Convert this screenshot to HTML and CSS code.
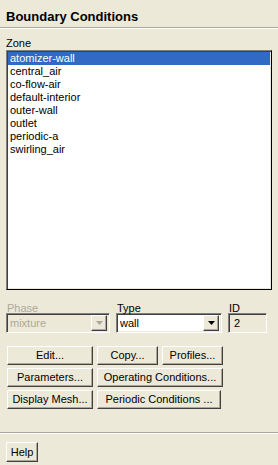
FILE: index.html
```html
<!DOCTYPE html>
<html lang="en">
<head>
  <meta charset="UTF-8">
  <title>Boundary Conditions</title>
  <link rel="stylesheet" href="styles.css">
</head>
<body>
  <!-- Header -->
  <h1 class="title">Boundary Conditions</h1>

  <!-- Zone List -->
  <div class="label zone-label">Zone</div>
  <ul class="listbox">
    <li class="selected">atomizer-wall</li>
    <li>central_air</li>
    <li>co-flow-air</li>
    <li>default-interior</li>
    <li>outer-wall</li>
    <li>outlet</li>
    <li>periodic-a</li>
    <li>swirling_air</li>
  </ul>

  <!-- Phase / Type / ID -->
  <div class="fields">
    <div class="field">
      <div class="label disabled">Phase</div>
      <div class="combo disabled">
        <span class="combo-text">mixture</span>
        <span class="drop"><svg width="7" height="4" viewBox="0 0 7 4"><polygon points="0,0 7,0 3.5,4" fill="#aca899"/></svg></span>
      </div>
    </div>
    <div class="field">
      <div class="label">Type</div>
      <div class="combo">
        <span class="combo-text">wall</span>
        <span class="drop"><svg width="7" height="4" viewBox="0 0 7 4"><polygon points="0,0 7,0 3.5,4" fill="#000"/></svg></span>
      </div>
    </div>
    <div class="field">
      <div class="label">ID</div>
      <div class="idbox">2</div>
    </div>
  </div>

  <!-- Action Buttons -->
  <div class="buttons">
    <div class="btn-row">
      <button class="btn wide">Edit...</button>
      <button class="btn small">Copy...</button>
      <button class="btn small">Profiles...</button>
    </div>
    <div class="btn-row">
      <button class="btn wide">Parameters...</button>
      <button class="btn long">Operating Conditions...</button>
    </div>
    <div class="btn-row">
      <button class="btn wide">Display Mesh...</button>
      <button class="btn periodic">Periodic Conditions ...</button>
    </div>
  </div>

  <!-- Footer -->
  <div class="footer">
    <button class="btn help">Help</button>
  </div>
</body>
</html>
```

FILE: styles.css
```css
/* General */
body {
  margin: 0;
  background: #ece9d8;
  font-family: 'Liberation Sans', Arial, sans-serif;
  font-size: 11px;
  color: #000;
  width: 278px;
  height: 465px;
  overflow: hidden;
}

/* Header */
.title {
  margin: 0;
  padding: 9px 6px 2px;
  font-size: 13px;
  line-height: 16px;
  font-weight: bold;
  border-bottom: 1px solid #aca899;
  box-shadow: 0 1px 0 #fff;
}

.label {
  line-height: 13px;
  height: 13px;
}

.label.disabled {
  color: #aca899;
}

.zone-label {
  margin-top: 9px;
  padding-left: 6px;
}

/* Zone List */
.listbox {
  list-style: none;
  margin: 0 6px;
  padding: 1px;
  height: 236px;
  background: #fff;
  border: 1px solid;
  border-color: #808080 #000 #000 #808080;
  box-shadow: inset 1px 1px 0 #404040, inset -1px -1px 0 #ece9d8;
}

.listbox li {
  line-height: 13px;
  height: 13px;
  padding-left: 2px;
  white-space: nowrap;
}

.listbox li.selected {
  background: #316ac5;
  color: #fff;
}

/* Phase / Type / ID */
.fields {
  display: grid;
  grid-template-columns: 104px 106px 39px;
  column-gap: 6px;
  padding: 0 6px;
  margin-top: 12px;
}

.fields .label {
  height: 11px;
  line-height: 13px;
  padding-left: 1px;
}

.combo,
.idbox {
  height: 20px;
  box-sizing: border-box;
  border: 1px solid;
  border-color: #808080 #fff #fff #808080;
  box-shadow: inset 1px 1px 0 #404040, inset -1px -1px 0 #ece9d8;
  padding: 2px;
}

.combo {
  display: flex;
  align-items: center;
  background: #fff;
}

.combo.disabled {
  background: #ece9d8;
  color: #aca899;
}

.combo-text {
  flex: 1;
  padding-left: 1px;
  line-height: 14px;
}

.drop {
  width: 16px;
  height: 16px;
  box-sizing: border-box;
  display: flex;
  align-items: center;
  justify-content: center;
  background: #ece9d8;
  border: 1px solid;
  border-color: #fff #404040 #404040 #fff;
  box-shadow: inset -1px -1px 0 #aca899;
}

.idbox {
  background: #ece9d8;
  padding: 2px 5px;
  line-height: 14px;
}

/* Action Buttons */
.buttons {
  margin-top: 13px;
  padding-left: 7px;
  display: flex;
  flex-direction: column;
  gap: 3px;
}

.btn-row {
  display: flex;
  gap: 4px;
}

.btn {
  height: 19px;
  box-sizing: border-box;
  padding: 0;
  margin: 0;
  font-family: inherit;
  font-size: 11px;
  color: #000;
  background: #ece9d8;
  border: 1px solid;
  border-color: #fff #404040 #404040 #fff;
  box-shadow: inset -1px -1px 0 #aca899;
  line-height: 15px;
  text-align: center;
}

.btn.wide { width: 86px; }
.btn.small { width: 61px; }
.btn.long { width: 126px; }
.btn.periodic { width: 124px; }

/* Footer */
.footer {
  margin-top: 23px;
  border-top: 1px solid #aca899;
  box-shadow: inset 0 1px 0 #fff;
  padding: 9px 6px 0;
}

.btn.help {
  width: 32px;
  height: 20px;
}
```
